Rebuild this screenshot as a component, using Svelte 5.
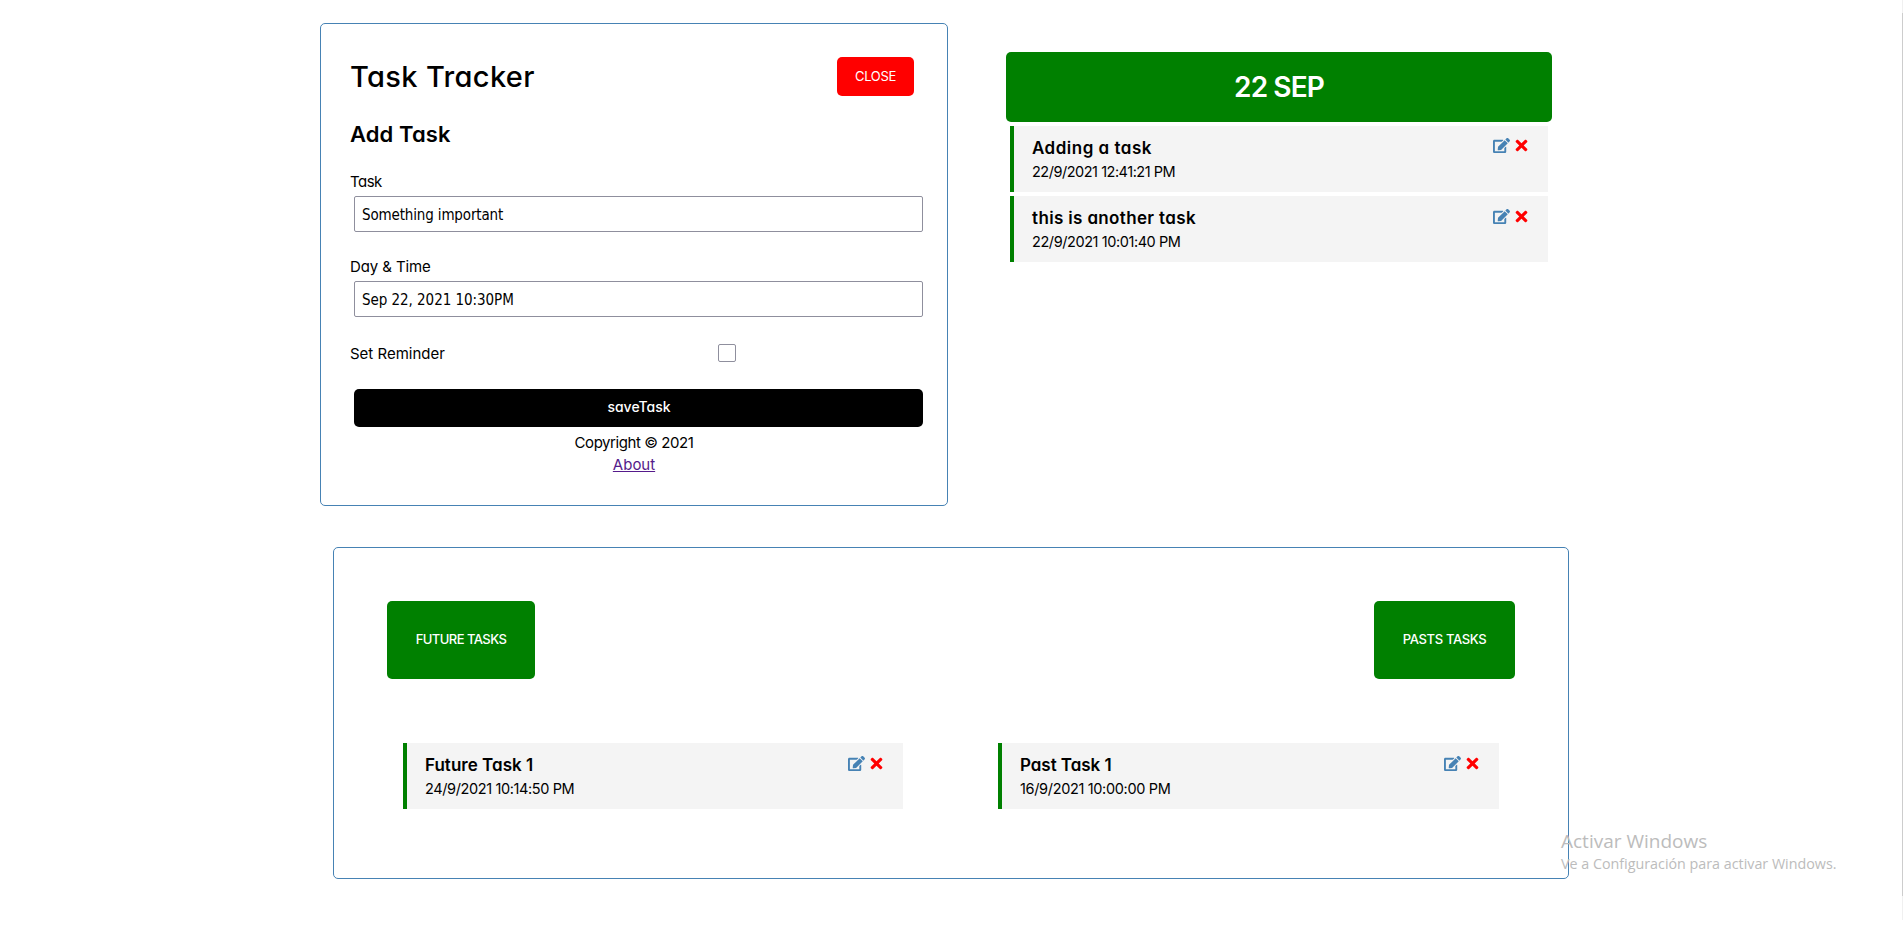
<script>
  let taskText = $state('Something important');
  let dayText = $state('Sep 22, 2021 10:30PM');
  let reminder = $state(false);

  const today = [
    { text: 'Adding a task', day: '22/9/2021 12:41:21 PM', track: 0.5, dayTrack: -0.48, drop: 1 },
    { text: 'this is another task', day: '22/9/2021 10:01:40 PM', track: 0.35, dayTrack: -0.42, drop: 2 }
  ];
  const future = [{ text: 'Future Task 1', day: '24/9/2021 10:14:50 PM', track: 0.02, dayTrack: -0.38, drop: 2 }];
  const past = [{ text: 'Past Task 1', day: '16/9/2021 10:00:00 PM', track: -0.05, dayTrack: -0.34, drop: 2 }];
</script>

{#snippet card(task)}
  <article class="task">
    <div class="info">
      <h3 style:letter-spacing="{task.track}px">{task.text}</h3>
      <p style:letter-spacing="{task.dayTrack}px">{task.day}</p>
    </div>
    <div class="icons" style:margin-top="{task.drop}px">
      <svg class="edit" viewBox="0 0 576 512" aria-hidden="true"><path d="M402.6 83.2l90.2 90.2c3.8 3.8 3.8 10 0 13.8L274.4 405.6l-92.8 10.3c-12.4 1.4-22.9-9.1-21.5-21.5l10.3-92.8L388.8 83.2c3.8-3.8 10-3.8 13.8 0zm162-22.9l-48.8-48.8c-15.2-15.2-39.9-15.2-55.2 0l-35.4 35.4c-3.8 3.8-3.8 10 0 13.8l90.2 90.2c3.8 3.8 10 3.8 13.8 0l35.4-35.4c15.2-15.3 15.2-40 0-55.2zM384 346.2V448H64V128h229.8c3.2 0 6.2-1.3 8.5-3.5l40-40c7.6-7.6 2.2-20.5-8.5-20.5H48C21.5 64 0 85.5 0 112v352c0 26.5 21.5 48 48 48h352c26.5 0 48-21.5 48-48V306.2c0-10.7-12.9-16-20.5-8.5l-40 40c-2.2 2.3-3.5 5.3-3.5 8.5z" /></svg>
      <svg class="remove" viewBox="0 0 352 512" aria-hidden="true"><path d="M242.72 256l100.07-100.07c12.28-12.28 12.28-32.19 0-44.48l-22.24-22.24c-12.28-12.28-32.19-12.28-44.48 0L176 189.28 75.93 89.21c-12.28-12.28-32.19-12.28-44.48 0L9.21 111.45c-12.28 12.28-12.28 32.19 0 44.48L109.28 256 9.21 356.07c-12.28 12.28-12.28 32.19 0 44.48l22.24 22.24c12.28 12.28 32.2 12.28 44.48 0L176 322.72l100.07 100.07c12.28 12.28 32.2 12.28 44.48 0l22.24-22.24c12.28-12.28 12.28-32.19 0-44.48L242.72 256z" /></svg>
    </div>
  </article>
{/snippet}

<main>
  <div class="top">
    <section class="panel tracker">
      <header>
        <h1>Task Tracker</h1>
        <button class="close">CLOSE</button>
      </header>
      <h2>Add Task</h2>
      <form onsubmit={(e) => e.preventDefault()}>
        <label class="name" for="task">Task</label>
        <input id="task" class="text" type="text" bind:value={taskText} />
        <label class="day" for="day">Day &amp; Time</label>
        <input id="day" class="text date" type="text" bind:value={dayText} />
        <div class="reminder">
          <label for="reminder">Set Reminder</label>
          <input id="reminder" type="checkbox" bind:checked={reminder} />
        </div>
        <button class="save">saveTask</button>
      </form>
      <footer>
        <p>Copyright © 2021</p>
        <a href="#about">About</a>
      </footer>
    </section>

    <section class="today">
      <h1 class="banner">22 SEP</h1>
      <div class="list">
        {#each today as task}{@render card(task)}{/each}
      </div>
    </section>
  </div>

  <section class="panel archive">
    <div class="switches">
      <button class="future">FUTURE TASKS</button>
      <button class="past">PASTS TASKS</button>
    </div>
    <div class="columns">
      <div>{#each future as task}{@render card(task)}{/each}</div>
      <div>{#each past as task}{@render card(task)}{/each}</div>
    </div>
  </section>
</main>

<aside class="watermark">
  <strong>Activar Windows</strong>
  <span>Ve a Configuración para activar Windows.</span>
</aside>
<div class="scroll"><div class="thumb"></div></div>

<style>
  :global(body) {
    margin: 0;
    background: #fff;
    overflow: hidden;
  }
  main {
    box-sizing: border-box;
    height: 932px;
    padding: 23px 334px 0 320px;
    color: #000;
    font: 15px/24px Inter, "Noto Sans", sans-serif;
    font-feature-settings: "cv11";
  }
  h1, h2, h3, p { margin: 0; font-weight: 500; }
  button {
    padding: 0;
    border: 0;
    border-radius: 5px;
    color: #fff;
    font-family: inherit;
    font-feature-settings: inherit;
    cursor: pointer;
  }
  .panel {
    box-sizing: border-box;
    border: 1px solid steelblue;
    border-radius: 5px;
  }
  .top {
    display: flex;
    justify-content: space-between;
    align-items: flex-start;
    padding-right: 17px;
  }
  .tracker {
    width: 628px;
    height: 483px;
    padding: 33px 29px 0;
  }
  header {
    display: flex;
    justify-content: space-between;
    align-items: center;
    height: 39px;
    padding-right: 4px;
  }
  header h1 { font-size: 29px; letter-spacing: 0.35px; }
  .close {
    width: 77px;
    height: 39px;
    padding-bottom: 1px;
    background: red;
    font-size: 13px;
    letter-spacing: -0.3px;
  }
  h2 {
    margin-top: 22px;
    font-size: 22px;
    font-weight: 600;
    line-height: 32px;
    letter-spacing: 0.1px;
  }
  form { display: flex; flex-direction: column; }
  .name { margin-top: 20px; letter-spacing: -0.5px; }
  .day { margin-top: 23px; letter-spacing: -0.1px; }
  .text {
    box-sizing: border-box;
    width: 569px;
    height: 36px;
    margin: 2px 0 0 4px;
    padding: 1px 7px 0;
    border: 1px solid #8f8f9d;
    border-radius: 2px;
    outline: 0;
    background: #fff;
    color: #000;
    font: 15px "DejaVu Sans Condensed", "DejaVu Sans", sans-serif;
    font-stretch: condensed;
    letter-spacing: -0.15px;
  }
  .date { letter-spacing: -0.05px; }
  .reminder {
    display: flex;
    justify-content: space-between;
    align-items: center;
    height: 24px;
    margin-top: 24px;
    padding-right: 182px;
  }
  .reminder label { padding-top: 1px; }
  .reminder input {
    box-sizing: border-box;
    width: 18px;
    height: 18px;
    margin: 0;
    appearance: none;
    border: 1px solid #8f8f9d;
    border-radius: 2px;
    background: #fff;
  }
  .reminder input:checked { background: steelblue; }
  .save {
    width: 569px;
    height: 38px;
    margin: 24px 0 0 4px;
    padding: 0 0 3px 1px;
    background: #000;
    font-size: 14px;
    font-weight: 500;
    letter-spacing: 0;
  }
  footer {
    display: flex;
    flex-direction: column;
    align-items: center;
    margin-top: 5px;
    line-height: 22px;
  }
  footer p { font-weight: 400; letter-spacing: -0.43px; }
  footer a { color: #551a8b; }
  .today { width: 546px; padding-top: 29px; }
  .banner {
    height: 70px;
    border-radius: 5px;
    background: green;
    color: #fff;
    font-size: 28px;
    font-weight: 600;
    line-height: 70px;
    letter-spacing: -0.9px;
    text-align: center;
  }
  .list {
    display: flex;
    flex-direction: column;
    gap: 4px;
    padding: 4px 4px 0;
  }
  .task {
    box-sizing: border-box;
    display: flex;
    justify-content: space-between;
    height: 66px;
    padding: 10px 18px 0;
    border-left: 4px solid green;
    background: #f4f4f4;
  }
  h3 { font-size: 17px; font-weight: 600; }
  .info p { font-size: 14.5px; font-weight: 400; }
  .icons { display: flex; gap: 3px; height: 17px; }
  .icons svg { width: 17px; height: 17px; cursor: pointer; }
  .edit { fill: steelblue; }
  .remove { fill: red; }
  .archive {
    width: 1236px;
    height: 332px;
    margin: 41px 0 0 13px;
    padding: 53px 53px 0;
  }
  .switches { display: flex; justify-content: space-between; }
  .switches button {
    height: 78px;
    padding-bottom: 2px;
    background: green;
    font-size: 13px;
    font-weight: 500;
  }
  .future { width: 148px; letter-spacing: -0.55px; }
  .past { width: 141px; letter-spacing: -0.35px; }
  .columns {
    display: grid;
    grid-template-columns: 500px 501px;
    justify-content: space-between;
    padding: 64px 16px 0;
  }
  .watermark {
    position: absolute;
    left: 1561px;
    top: 828px;
    display: flex;
    flex-direction: column;
    color: #bcbcbc;
    font-family: "Open Sans", "Noto Sans", sans-serif;
    white-space: nowrap;
  }
  .watermark strong { font-size: 19px; font-weight: 400; line-height: 26px; }
  .watermark span { font-size: 14.3px; line-height: 20px; }
  .scroll {
    position: absolute;
    top: 0;
    right: 0;
    display: flow-root;
    width: 1px;
    height: 920px;
    background: #f0f0f0;
  }
  .thumb { height: 883px; margin-top: 13px; background: #cdcdcd; }
</style>
